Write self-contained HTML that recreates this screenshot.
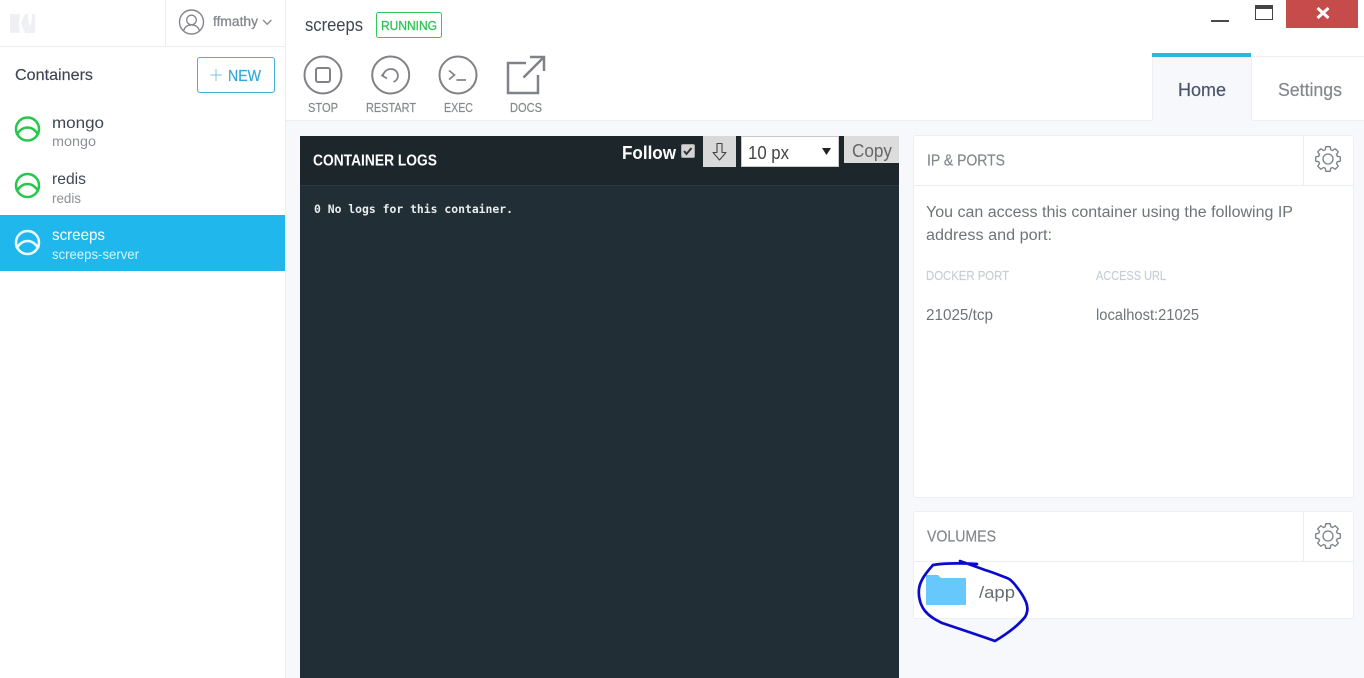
<!DOCTYPE html>
<html>
<head>
<meta charset="utf-8">
<style>
html,body{margin:0;padding:0;width:1364px;height:678px;overflow:hidden;background:#f6f8fc}
svg{display:block}
text{font-family:"Liberation Sans",sans-serif;}
.n{font-size:16px;fill:#3f4653}
.s{font-size:14px;fill:#8d9096}
.l{font-size:12.5px;fill:#85888d;stroke:#85888d;stroke-width:.2}
.h{font-size:15.5px;fill:#84888d;stroke:#84888d;stroke-width:.2}
.p{font-size:15.5px;fill:#6f7479}
.t{font-size:12.5px;fill:#c9ced5;stroke:#c9ced5;stroke-width:.2}
.g{fill:none;stroke:#7b8087;stroke-width:1.3;stroke-linejoin:round}
.i{fill:none;stroke:#808287;stroke-width:2}
</style>
</head>
<body>
<svg width="1364" height="678" viewBox="0 0 1364 678" xmlns="http://www.w3.org/2000/svg">
<defs>
<path id="gear" d="M12.31 2.17L9.18 2.81 8.48 4.51 10.24 7.17 7.17 10.24 4.51 8.48 2.81 9.18 2.17 12.31-2.17 12.31-2.81 9.18-4.51 8.48-7.17 10.24-10.24 7.17-8.48 4.51-9.18 2.81-12.31 2.17-12.31-2.17-9.18-2.81-8.48-4.51-10.24-7.17-7.17-10.24-4.51-8.48-2.81-9.18-2.17-12.31 2.17-12.31 2.81-9.18 4.51-8.48 7.17-10.24 10.24-7.17 8.48-4.51 9.18-2.81 12.31-2.17Z"/>
</defs>

<!-- backgrounds -->
<rect x="0" y="0" width="1364" height="678" fill="#f6f8fc"/>
<rect x="0" y="0" width="285" height="678" fill="#fff"/>
<rect x="285" y="0" width="1" height="678" fill="#eceff2"/>
<rect x="286" y="0" width="1078" height="120" fill="#fff"/>
<rect x="286" y="120" width="866" height="1" fill="#eceff2"/>
<rect x="1252" y="120" width="112" height="1" fill="#eceff2"/>
<rect x="0" y="46" width="285" height="1" fill="#eceff2"/>
<rect x="165" y="0" width="1" height="46" fill="#eceff2"/>

<!-- logo -->
<path d="M10 14h25v19H10z" fill="#eef0f3"/>
<path d="M20 14h5l-4 9 4 10h-5l-1-9z" fill="#fff"/>
<path d="M28 14h4c0 5-.5 9-2 12-1.500-3-2-7-2-12z" fill="#fff"/>

<!-- user -->
<circle cx="191.500" cy="22" r="12" fill="none" stroke="#85858c" stroke-width="1.400"/>
<circle cx="191.500" cy="20" r="4.800" fill="none" stroke="#85858c" stroke-width="1.300"/>
<path d="M183.500 31c1-4 3.500-6 8-6s7 2 8 6" fill="none" stroke="#85858c" stroke-width="1.300"/>
<text x="213" y="26" font-size="13.5" fill="#85888e" stroke="#85888e" stroke-width=".3" textLength="45" lengthAdjust="spacingAndGlyphs">ffmathy</text>
<path d="M263 20l4.200 4.200 4.200-4.200" fill="none" stroke="#8a8d93" stroke-width="1.400"/>

<!-- containers header -->
<text class="n" x="15" y="80" textLength="78" lengthAdjust="spacingAndGlyphs" stroke="#3f4653" stroke-width=".15">Containers</text>
<rect x="197.500" y="57.500" width="77" height="35" rx="2.500" fill="#fff" stroke="#45b0d3"/>
<path d="M216 69v12M210.500 75h11.500" stroke="#7dc3dd" stroke-width="1"/>
<text x="228" y="81" font-size="15.500" fill="#2fa8dd" stroke="#2fa8dd" stroke-width=".2" textLength="33" lengthAdjust="spacingAndGlyphs">NEW</text>

<!-- list -->
<g fill="none" stroke="#27c64c" stroke-width="2.500">
<circle cx="27.500" cy="129" r="11.500"/>
<path d="M16.500 135c3-5 7-7.500 11-7.500s8 2.500 11 7.500"/>
<circle cx="27.500" cy="185.500" r="11.500"/>
<path d="M16.500 191.500c3-5 7-7.500 11-7.500s8 2.500 11 7.500"/>
</g>
<text class="n" x="52" y="128" textLength="52" lengthAdjust="spacingAndGlyphs">mongo</text>
<text class="s" x="52" y="146" textLength="44" lengthAdjust="spacingAndGlyphs">mongo</text>
<text class="n" x="52" y="184" textLength="34" lengthAdjust="spacingAndGlyphs">redis</text>
<text class="s" x="52" y="203" textLength="29" lengthAdjust="spacingAndGlyphs">redis</text>
<rect x="0" y="215" width="285" height="56" fill="#20b8ec"/>
<g fill="none" stroke="#eefaff" stroke-width="2.500">
<circle cx="27.500" cy="242.500" r="11.500"/>
<path d="M16.500 248.500c3-5 7-7.500 11-7.500s8 2.500 11 7.500"/>
</g>
<text x="52" y="240" font-size="16" fill="#fff" textLength="53" lengthAdjust="spacingAndGlyphs">screeps</text>
<text x="52" y="259" font-size="14" fill="#d8f3fd" textLength="87" lengthAdjust="spacingAndGlyphs">screeps-server</text>

<!-- title -->
<text x="305" y="31" font-size="18" fill="#3f4653" textLength="58" lengthAdjust="spacingAndGlyphs">screeps</text>
<rect x="376.500" y="12.500" width="65" height="25" rx="2" fill="#fff" stroke="#33c75e"/>
<text x="381" y="30" font-size="13" fill="#2cc454" stroke="#2cc454" stroke-width=".3" textLength="56" lengthAdjust="spacingAndGlyphs">RUNNING</text>

<!-- actions -->
<circle class="i" cx="323" cy="75" r="18.500"/>
<rect class="i" x="316" y="68" width="14" height="14" rx="2"/>
<circle class="i" cx="390.700" cy="75" r="18.500"/>
<path class="i" style="stroke-width:1.700" d="M383 75.500c1-4 4-6.500 8-6.500a6.700 6.700 0 0 1 2.500 13"/>
<path class="i" style="stroke-width:1.700" d="M386 70.500l-4 5 5 3"/>
<circle class="i" cx="458" cy="75" r="18.500"/>
<path class="i" style="stroke-width:1.700" d="M449 70.500l5.500 4.500-5.500 4.500M456.500 80h9.500"/>
<path class="i" style="stroke-width:2.500" d="M526 63H508v30h30V75"/>
<path class="i" style="stroke-width:2.500" d="M523.500 77.500L543 58M530 57h14v14"/>
<text class="l" x="308" y="112" textLength="30" lengthAdjust="spacingAndGlyphs">STOP</text>
<text class="l" x="366" y="112" textLength="50" lengthAdjust="spacingAndGlyphs">RESTART</text>
<text class="l" x="444" y="112" textLength="29" lengthAdjust="spacingAndGlyphs">EXEC</text>
<text class="l" x="510" y="112" textLength="32" lengthAdjust="spacingAndGlyphs">DOCS</text>

<!-- window controls -->
<rect x="1211" y="20" width="18" height="2" fill="#4a4a4a"/>
<rect x="1255.500" y="5.500" width="17" height="14" fill="#fff" stroke="#444"/>
<rect x="1255" y="5" width="18" height="4" fill="#444"/>
<rect x="1286" y="0" width="72" height="28" fill="#c64c4b"/>
<path d="M1317.500 8l11 10M1328.500 8l-11 10" stroke="#fff" stroke-width="3"/>

<!-- tabs -->
<rect x="1152" y="56" width="100" height="65" fill="#f6f8fc"/>
<rect x="1152" y="56" width="1" height="64" fill="#eceff2"/>
<rect x="1251" y="56" width="1" height="64" fill="#eceff2"/>
<rect x="1252" y="56" width="112" height="1" fill="#eceff2"/>
<rect x="1152" y="53" width="99" height="4" fill="#2bb6e4"/>
<text x="1178" y="96" font-size="18.500" fill="#4b5468" stroke="#4b5468" stroke-width=".2" textLength="48" lengthAdjust="spacingAndGlyphs">Home</text>
<text x="1278" y="96" font-size="18.500" fill="#84888d" stroke="#84888d" stroke-width=".2" textLength="64" lengthAdjust="spacingAndGlyphs">Settings</text>

<!-- logs -->
<rect x="300" y="136" width="599" height="542" fill="#222e35"/>
<rect x="300" y="136" width="599" height="49" fill="#1c262b"/>
<rect x="300" y="185" width="599" height="1" fill="#2b373e"/>
<text x="313" y="165.500" font-size="15.500" font-weight="bold" fill="#fff" textLength="124" lengthAdjust="spacingAndGlyphs">CONTAINER LOGS</text>
<text x="622" y="159" font-size="18" font-weight="bold" fill="#fff" textLength="54" lengthAdjust="spacingAndGlyphs">Follow</text>
<rect x="681.500" y="144.500" width="13" height="13" rx="1.500" fill="#d4d4d4" stroke="#aaa"/>
<path d="M684 151l2.500 3 5-6" fill="none" stroke="#333" stroke-width="2"/>
<rect x="703" y="136" width="33" height="31" fill="#d9d9d9"/>
<path d="M717 143.500h5v9h4l-6.500 7.500-6.500-7.500h4z" fill="none" stroke="#444" stroke-width="1.100" stroke-linejoin="round"/>
<rect x="741.500" y="136.500" width="97" height="30" fill="#fff" stroke="#c8c8c8"/>
<text x="748" y="159" font-size="18" fill="#444" textLength="41" lengthAdjust="spacingAndGlyphs">10 px</text>
<path d="M822 148h9l-4.500 7z" fill="#222"/>
<rect x="844" y="136" width="55" height="27" fill="#dcdcdc"/>
<text x="852" y="157" font-size="18" fill="#666" textLength="40" lengthAdjust="spacingAndGlyphs">Copy</text>
<text x="314" y="213" style="font-family:'DejaVu Sans Mono','Liberation Mono',monospace" font-size="11.500" font-weight="bold" fill="#e8edf0" textLength="199" lengthAdjust="spacingAndGlyphs">0 No logs for this container.</text>

<!-- IP & PORTS -->
<rect x="913.500" y="135.500" width="440" height="362" rx="2" fill="#fff" stroke="#eceff2"/>
<rect x="914" y="185" width="439" height="1" fill="#eceff2"/>
<rect x="1303" y="136" width="1" height="49" fill="#eceff2"/>
<text class="h" x="927" y="165.500" textLength="78" lengthAdjust="spacingAndGlyphs">IP &amp; PORTS</text>
<use href="#gear" class="g" transform="translate(1328 159)"/>
<circle class="g" cx="1328" cy="159" r="5"/>
<text class="p" x="926" y="217" textLength="367" lengthAdjust="spacingAndGlyphs">You can access this container using the following IP</text>
<text class="p" x="926" y="240" textLength="126" lengthAdjust="spacingAndGlyphs">address and port:</text>
<text class="t" x="926" y="280" textLength="83" lengthAdjust="spacingAndGlyphs">DOCKER PORT</text>
<text class="t" x="1096" y="280" textLength="70" lengthAdjust="spacingAndGlyphs">ACCESS URL</text>
<text class="p" x="926" y="320" textLength="67" lengthAdjust="spacingAndGlyphs">21025/tcp</text>
<text class="p" x="1096" y="320" textLength="103" lengthAdjust="spacingAndGlyphs">localhost:21025</text>

<!-- VOLUMES -->
<rect x="913.500" y="511.500" width="440" height="107" rx="2" fill="#fff" stroke="#eceff2"/>
<rect x="914" y="561" width="439" height="1" fill="#eceff2"/>
<rect x="1303" y="512" width="1" height="49" fill="#eceff2"/>
<text class="h" x="927" y="541.500" textLength="69" lengthAdjust="spacingAndGlyphs">VOLUMES</text>
<use href="#gear" class="g" transform="translate(1328 536)"/>
<circle class="g" cx="1328" cy="536" r="5"/>
<path d="M926 575h12l3 3h25v27h-40z" fill="#66c8fb"/>
<text x="979" y="598" font-size="17" fill="#666b70" textLength="36" lengthAdjust="spacingAndGlyphs">/app</text>

<!-- hand drawn outline -->
<path d="M977 564C960 563 945 563 933 565C925 574 920 581 919 589C918 598 921 606 925 611C930 617 936 620 942 623C960 629 978 635 995 641C1005 635 1017 627 1025 617C1028 612 1028 607 1026 602C1023 595 1020 591 1016 586C1013 582 1010 579 1007 578C999 575 992 572 985 570C977 567 968 564 960 561" fill="none" stroke="#0a0acb" stroke-width="2.700" stroke-linecap="round" stroke-linejoin="round"/>
</svg>
</body>
</html>
